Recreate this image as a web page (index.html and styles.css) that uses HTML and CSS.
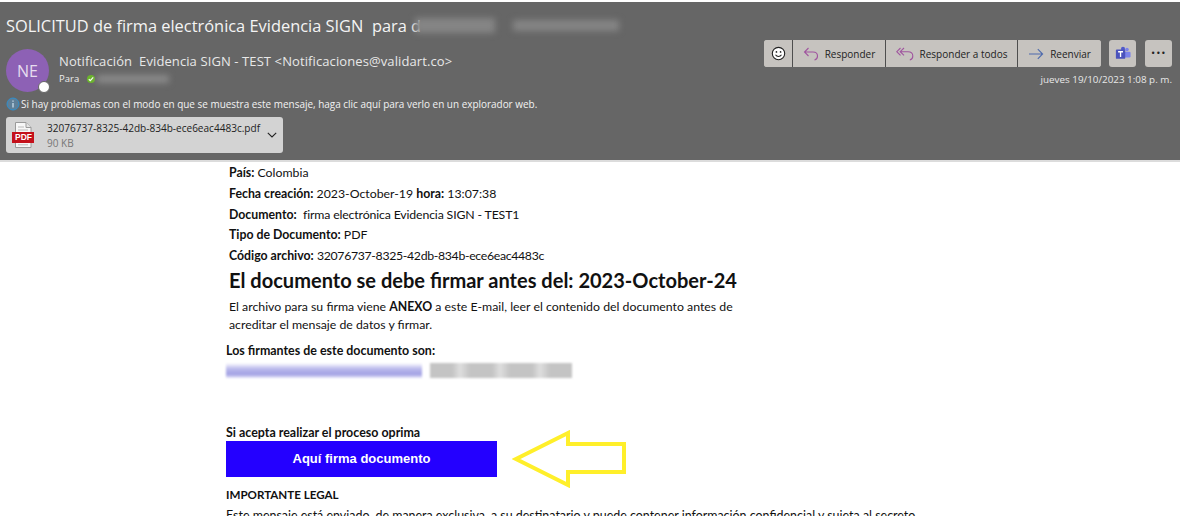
FILE: index.html
```html
<!DOCTYPE html>
<html lang="es">
<head>
<meta charset="utf-8">
<title>SOLICITUD de firma electrónica</title>
<link rel="stylesheet" href="styles.css">
</head>
<body>
<header class="mail-head">
  <h1 class="subject"><span>SOLICITUD de firma electrónica Evidencia SIGN&nbsp; para d</span><i class="blur subject-blur-a"></i><i class="blur subject-blur-b"></i></h1>
  <div class="head-main">
    <div class="avatar">NE<i class="presence"></i></div>
    <div class="sender">
      <div class="from">Notificación&nbsp; Evidencia SIGN - TEST &lt;Notificaciones@validart.co&gt;</div>
      <div class="to">Para <i class="ok-dot"><svg viewBox="0 0 8 8" width="8" height="8"><path d="M1.8 4.2 3.3 5.6 6.2 2.4" fill="none" stroke="#fff" stroke-width="1.2"/></svg></i><i class="blur to-blur"></i></div>
    </div>
    <div class="actions">
      <div class="toolbar">
        <div class="btn-group">
          <button class="btn smile"><svg viewBox="0 0 16 16" width="15" height="15"><circle cx="8" cy="8" r="6.6" fill="#fff" stroke="#222" stroke-width="1.2"/><circle cx="5.8" cy="6.3" r=".9" fill="#222"/><circle cx="10.2" cy="6.3" r=".9" fill="#222"/><path d="M4.8 9.4c1.5 2.4 4.9 2.4 6.4 0" fill="none" stroke="#222" stroke-width="1.1"/></svg></button>
          <button class="btn"><svg viewBox="0 0 16 16" width="16" height="16"><path d="M5.5 2 1.5 6l4 4M1.5 6H10c3 0 4.5 1.8 4.5 4s-1 3.500-3 4" fill="none" stroke="#a0559f" stroke-width="1.100"/></svg>Responder</button>
          <button class="btn"><svg viewBox="0 0 18 16" width="18" height="16"><path d="M4.500 2 .8 5.700l3.700 3.700M8 2 4.200 5.700 8 9.400M4.200 5.700H12c3 0 4.800 1.800 4.800 4.200s-1 3.600-3 4.100" fill="none" stroke="#a0559f" stroke-width="1.100"/></svg>Responder a todos</button>
          <button class="btn"><svg viewBox="0 0 16 16" width="16" height="16"><path d="M1 8h13.500M9.800 3.200 14.600 8l-4.800 4.800" fill="none" stroke="#4f6bad" stroke-width="1.100"/></svg>Reenviar</button>
        </div>
        <button class="btn-single"><svg viewBox="0 0 18 16" width="16" height="15"><circle cx="13.500" cy="3.500" r="2" fill="#7b83eb"/><rect x="10" y="6" width="7.500" height="6.500" rx="1.500" fill="#7b83eb"/><circle cx="9" cy="2.800" r="2.300" fill="#5059c9"/><rect x="1" y="3.500" width="10.500" height="10.500" rx="1" fill="#4b53bc"/><path d="M3.500 6h5.500M6.250 6v6" stroke="#fff" stroke-width="1.500"/></svg></button>
        <button class="btn-single dots">•••</button>
      </div>
      <div class="date">jueves 19/10/2023 1:08 p. m.</div>
    </div>
  </div>
  <div class="info"><svg viewBox="0 0 14 14" width="14" height="14"><circle cx="7" cy="7" r="6" fill="#5e7f98" stroke="#2f8fce" stroke-width="1"/><path d="M7 6v4.500M7 3.500v1.200" stroke="#cfe3f2" stroke-width="1.200"/></svg><span>Si hay problemas con el modo en que se muestra este mensaje, haga clic aquí para verlo en un explorador web.</span></div>
  <div class="attachment">
    <svg class="pdf" viewBox="0 0 22 26" width="22" height="26"><path d="M3.500.5H14L19 5.500V25.500H3.500Z" fill="#f7f7f7" stroke="#9a9a9a"/><path d="M14 .5V5.500H19" fill="#e4e4e4" stroke="#9a9a9a"/><path d="M6 5h6M6 8h10M6 22.800h10" stroke="#bbb"/><rect x="0" y="10" width="22" height="11" fill="#c4111b"/></svg>
    <span class="pdf-label">PDF</span>
    <div class="att-text">
      <div class="att-name">32076737-8325-42db-834b-ece6eac4483c.pdf</div>
      <div class="att-size">90 KB</div>
    </div>
    <svg class="chev" viewBox="0 0 10 6" width="10" height="6"><path d="M.8.8 5 5 9.200.8" fill="none" stroke="#222" stroke-width="1.100"/></svg>
  </div>
</header>
<main class="mail-body">
  <div class="meta">
    <p><b>País:</b> Colombia</p>
    <p><b>Fecha creación:</b> 2023-October-19 <b>hora:</b> 13:07:38</p>
    <p><b>Documento:</b>&nbsp; <span class="tight-a">firma electrónica Evidencia SIGN - TEST1</span></p>
    <p><b>Tipo de Documento:</b> PDF</p>
    <p><b>Código archivo:</b> <span class="tight-b">32076737-8325-42db-834b-ece6eac4483c</span></p>
  </div>
  <h2 class="deadline">El documento se debe firmar antes del: 2023-October-24</h2>
  <p class="notice">El archivo para su firma viene <b>ANEXO</b> a este E-mail, leer el contenido del documento antes de acreditar el mensaje de datos y firmar.</p>
  <section class="lower">
    <p class="label">Los firmantes de este documento son:</p>
    <div class="signers"><i class="signer-a"></i><i class="signer-b"></i></div>
    <p class="label accept">Si acepta realizar el proceso oprima</p>
    <div class="cta-row">
      <a class="cta">Aquí firma documento</a>
      <svg class="arrow" viewBox="0 0 116 58" width="116" height="58"><path d="M56 3 4 29l52 26V42H112V14H56Z" fill="none" stroke="#ffef2a" stroke-width="4"/></svg>
    </div>
    <p class="label legal">IMPORTANTE LEGAL</p>
    <p class="legal-text">Este mensaje está enviado, de manera exclusiva, a su destinatario y puede contener información confidencial y sujeta al secreto</p>
  </section>
</main>
</body>
</html>
```
FILE: styles.css
```css
* { box-sizing: border-box; }
html, body { margin: 0; height: 516px; overflow: hidden; background: #fff; }
body { font-family: "Open Sans", "Noto Sans", sans-serif; color: #111; }
p, h1, h2 { margin: 0; font-weight: 400; }
i { display: inline-block; }

.mail-head {
  height: 158px;
  margin-top: 2px;
  background: #666;
  color: #f1f1f1;
  box-shadow: 0 2px 0 #dcdcdc;
}
.subject { display: flex; align-items: center; height: 34px; padding: 12px 0 0 6px; font-size: 16.400px; white-space: nowrap; color: #f4f4f4; }
.blur { background: #858585; filter: blur(3px); }
.subject-blur-a { width: 80px; height: 15px; margin-left: -6px; }
.subject-blur-b { width: 106px; height: 11px; margin-left: 18px; }

.head-main { display: flex; padding: 12px 0 0 6px; height: 59px; }
.avatar {
  width: 43px; height: 43px; border-radius: 50%; background: #8d61b5; color: #e6dcef;
  font-size: 16px; display: flex; align-items: center; justify-content: center;
  position: relative; flex: none; margin-top: 1px;
}
.presence { position: absolute; right: -1px; bottom: -1px; width: 12px; height: 12px; border-radius: 50%; background: #fff; border: 1px solid #666; }
.sender { margin-left: 10px; padding-top: 5px; flex: 1; }
.from { font-size: 13px; line-height: 16px; color: #e8e8e8; letter-spacing: .1px; }
.to { display: flex; align-items: center; font-size: 9.500px; line-height: 14px; margin-top: 3px; color: #eee; }
.ok-dot { width: 8px; height: 8px; border-radius: 50%; background: #6bb52c; margin-left: 8px; display: flex; }
.to-blur { width: 72px; height: 8px; margin-left: 2px; background: #8a8a8a; }

.actions { width: 416px; flex: none; margin-top: -8px; padding-right: 8px; text-align: right; }
.toolbar { display: flex; gap: 8px; }
.btn-group { display: flex; width: 337px; height: 27px; border-radius: 3px; background: #c6c3bf; overflow: hidden; }
.btn {
  display: flex; align-items: center; justify-content: center; gap: 6px;
  border: 0; border-right: 1px solid #4e4e4e; background: #c6c3bf; color: #222;
  font: 400 10px "Open Sans", sans-serif; padding: 0; height: 27px;
}
.btn:nth-child(1) { width: 29px; }
.btn:nth-child(2) { width: 93px; }
.btn:nth-child(3) { width: 132px; }
.btn:nth-child(4) { width: 83px; border-right: 0; }
.btn-single { width: 27px; height: 27px; border: 0; border-radius: 3px; background: #c6c3bf; padding: 0; display: flex; align-items: center; justify-content: center; color: #222; }
.btn-single:last-child { margin-left: 1px; }
.dots { font: 400 8px "DejaVu Sans", sans-serif; letter-spacing: .5px; }
.date { font-size: 9.850px; line-height: 14px; margin-top: 5px; color: #e8e8e8; }

.info { display: flex; align-items: center; padding-left: 6px; height: 16px; margin-top: 1px; font-size: 9.950px; color: #f2f2f2; }
.info svg { flex: none; margin-right: 1px; }

.attachment {
  display: flex; align-items: center; position: relative;
  width: 277px; height: 36px; margin: 5px 0 0 6px; border-radius: 3px;
  background: #d3d3d3; color: #222; padding-left: 6px;
}
.pdf { flex: none; }
.pdf-label { position: absolute; left: 9px; top: 15px; font: 700 8.500px/11px "Liberation Sans", sans-serif; color: #fff; }
.att-text { margin-left: 13px; flex: 1; padding-top: 1px; }
.att-name { font-size: 10.050px; line-height: 14px; white-space: nowrap; }
.att-size { font-size: 10px; line-height: 14px; color: #777; margin-top: 1px; }
.chev { margin-right: 6px; flex: none; }

.mail-body { padding: 2px 0 0 226px; font-family: Lato, "Open Sans", sans-serif; }
.meta { padding-left: 3px; }
.meta p { font-size: 12.300px; line-height: 21px; height: 20.800px; white-space: nowrap; }
.tight-a { letter-spacing: -.15px; }
.tight-b { letter-spacing: -.33px; }
.deadline { padding-left: 3px; font-size: 20.050px; line-height: 24px; font-weight: 700; margin-top: 2px; white-space: nowrap; color: #111; }
.notice { padding-left: 3px; width: 520px; font-size: 12.300px; line-height: 18px; margin-top: 6px; }
.lower { margin-top: 9px; }
.label { font-size: 12.450px; font-weight: 700; line-height: 16px; white-space: nowrap; }
.signers { display: flex; height: 15px; margin-top: 4px; width: 346px; }
.signer-a { width: 196px; background: linear-gradient(#fff, #b9b8ec 40%, #a2a1e4 75%, #e8e8fa); filter: blur(1px); }
.signer-b { width: 142px; margin-left: 8px; background: repeating-linear-gradient(90deg, #c4c4c4 0 22px, #dedede 30px, #c4c4c4 40px); filter: blur(1px); }
.accept { margin-top: 47px; }
.cta-row { display: flex; align-items: center; height: 36px; }
.cta { width: 271px; height: 36px; background: #2400ff; color: #fff; font: 700 13px/36px "Liberation Sans", sans-serif; text-align: center; flex: none; }
.arrow { flex: none; margin-left: 15px; }
.legal { margin-top: 10px; font-size: 11.600px; }
.legal-text { font-size: 12.440px; line-height: 16px; margin-top: 5px; white-space: nowrap; }
```
